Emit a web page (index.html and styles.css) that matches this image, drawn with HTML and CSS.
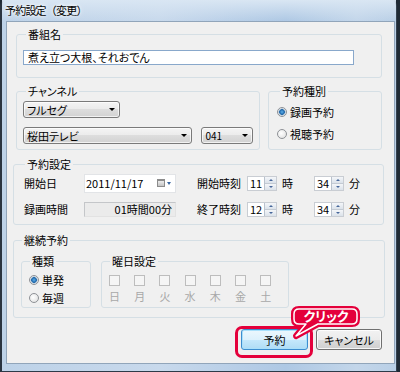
FILE: index.html
```html
<!DOCTYPE html>
<html lang="ja">
<head>
  <meta charset="UTF-8" />
  <title>予約設定（変更）</title>
  <link rel="stylesheet" href="styles.css">
</head>
<body>

<div class="window">
  <div class="titlebar">予約設定（変更）</div>

  <div class="client">
    <fieldset class="group g-title">
      <legend>番組名</legend>
      <div class="textbox">煮え立つ大根、それおでん</div>
    </fieldset>

    <div class="channel-row">
      <fieldset class="group g-channel">
        <legend>チャンネル</legend>
        <div class="combo c-kind">フルセグ<i class="arrow"></i></div>
        <div class="combo-line">
          <div class="combo c-station">桜田テレビ<i class="arrow"></i></div>
          <div class="combo c-num">041<i class="arrow"></i></div>
        </div>
      </fieldset>

      <fieldset class="group g-kind">
        <legend>予約種別</legend>
        <div class="radios">
          <div class="radio on"><i></i>録画予約</div>
          <div class="radio"><i></i>視聴予約</div>
        </div>
      </fieldset>
    </div>

    <fieldset class="group outer g-sched">
      <legend>予約設定</legend>
      <div class="sched-row">
        <span class="lbl">開始日</span>
        <div class="date">2011/11/17<i class="cal"></i><i class="drop"></i></div>
        <span class="lbl2">開始時刻</span>
        <div class="spin"><span>11</span><div class="spin-btns"><b class="up"></b><b class="down"></b></div></div>
        <span class="unit">時</span>
        <div class="spin"><span>34</span><div class="spin-btns"><b class="up"></b><b class="down"></b></div></div>
        <span class="unit last">分</span>
      </div>
      <div class="sched-row">
        <span class="lbl">録画時間</span>
        <div class="readonly">01時間00分</div>
        <span class="lbl2">終了時刻</span>
        <div class="spin"><span>12</span><div class="spin-btns"><b class="up"></b><b class="down"></b></div></div>
        <span class="unit">時</span>
        <div class="spin"><span>34</span><div class="spin-btns"><b class="up"></b><b class="down"></b></div></div>
        <span class="unit last">分</span>
      </div>
    </fieldset>

    <fieldset class="group outer g-repeat">
      <legend>継続予約</legend>
      <div class="repeat-inner">
        <fieldset class="group g-type">
          <legend>種類</legend>
          <div class="radios tight">
            <div class="radio on"><i></i>単発</div>
            <div class="radio"><i></i>毎週</div>
          </div>
        </fieldset>
        <fieldset class="group g-days">
          <legend>曜日設定</legend>
          <div class="days">
            <div class="day"><i></i>日</div>
            <div class="day"><i></i>月</div>
            <div class="day"><i></i>火</div>
            <div class="day"><i></i>水</div>
            <div class="day"><i></i>木</div>
            <div class="day"><i></i>金</div>
            <div class="day"><i></i>土</div>
          </div>
        </fieldset>
      </div>
    </fieldset>

    <div class="buttons">
      <button class="btn default">予約</button>
      <button class="btn">キャンセル</button>
    </div>

    <!-- annotation -->
    <div class="mark"></div>
    <div class="bubble">
      <svg width="80" height="40" viewBox="0 0 80 40">
        <path d="M15 6 H68 Q73 6 73 11 V16 Q73 21 68 21 H34 L12 33 L22 21 H15 Q10 21 10 16 V11 Q10 6 15 6 Z" fill="#e4003b" stroke="#e4003b" stroke-width="6" stroke-linejoin="round"/>
        <path d="M15 6 H68 Q73 6 73 11 V16 Q73 21 68 21 H34 L12 33 L22 21 H15 Q10 21 10 16 V11 Q10 6 15 6 Z" fill="#e4003b" stroke="#ffffff" stroke-width="1.5" stroke-linejoin="round"/>
      </svg>
      <span>クリック</span>
    </div>
  </div>
</div>

</body>
</html>
```

FILE: styles.css
```css
* {
  box-sizing: border-box;
}
body {
  margin: 0;
  width: 400px;
  height: 372px;
  overflow: hidden;
  background: #1f2a35;
  font-family: "Noto Sans CJK JP", "Noto Sans", sans-serif;
  font-size: 11px;
  font-feature-settings: "palt";
  color: #000;
}
.window {
  width: 397px;
  height: 372px;
  border-left: 2px solid #2a3440;
  border-right: 1px solid #34414f;
  border-bottom: 1px solid #2d3a48;
  border-radius: 6px 6px 0 0;
  background: linear-gradient(to right, #bdd2e8, #c8d9ec 40%, #aec8e4 72%, #c3d6ea 90%, #b9cfe6);
}
.titlebar {
  height: 21px;
  line-height: 20px;
  padding-left: 3px;
  font-feature-settings: normal;
  letter-spacing: -0.8px;
  text-shadow: 0 0 5px #fff, 0 0 3px #fff;
  background: linear-gradient(#d9e6f3, rgba(200, 217, 236, 0));
}
.client {
  position: relative;
  margin-left: 4px;
  width: 389px;
  height: 343px;
  border: 1px solid #91a5ba;
  background: #f0f0f0;
}

/* group boxes */
.group {
  margin: 0;
  padding: 0;
  min-width: 0;
  border: 1px solid #d5dfe5;
  border-radius: 3px;
}
.group legend {
  padding: 0 2px;
  margin-left: 3px;
  line-height: 12px;
}
.group.outer legend {
  margin-left: 1px;
}
.g-title {
  margin: 6px 0 0 9px;
  width: 366px;
  padding: 10px 6px 12px;
}
.textbox {
  width: 331px;
  height: 15px;
  line-height: 13px;
  padding-left: 4px;
  background: #fff;
  border: 1px solid #89a8cb;
}

.channel-row {
  display: flex;
  gap: 8px;
  margin: 7px 0 0 9px;
}
.g-channel {
  width: 244px;
  padding: 4px 6px 5px;
}
.g-kind {
  width: 114px;
  padding: 8px 8px 0;
}
.combo {
  display: flex;
  align-items: center;
  justify-content: space-between;
  height: 17px;
  padding: 0 4px 0 3px;
  border: 1px solid #7a7a7a;
  border-radius: 3px;
  background: linear-gradient(#f4f4f4, #ebebeb 50%, #dddddd 50%, #d2d2d2);
  box-shadow: inset 0 0 0 1px rgba(255, 255, 255, 0.7);
  line-height: 14px;
}
.combo .arrow {
  border-top: 3px solid #000;
  border-left: 3px solid transparent;
  border-right: 3px solid transparent;
}
.c-kind {
  width: 97px;
}
.combo-line {
  display: flex;
  gap: 9px;
  margin-top: 9px;
}
.c-station {
  width: 171px;
}
.c-num {
  width: 52px;
  font-size: 10px;
}

.radios {
  display: flex;
  flex-direction: column;
  gap: 8px;
}
.radios.tight {
  gap: 4px;
}
.radio {
  display: flex;
  align-items: center;
  gap: 3px;
  height: 14px;
}
.radio i {
  width: 10px;
  height: 10px;
  border-radius: 50%;
  border: 1px solid #8e9196;
  background: radial-gradient(circle at 40% 40%, #ffffff, #dcdcdc);
}
.radio.on i {
  background: radial-gradient(circle, #5db0ea 0, #1d64a8 2.5px, #9fb9cf 3px, #f2f4f6 4px);
}

/* reservation settings */
.g-sched {
  margin: 8px 0 0 6px;
  width: 371px;
  padding: 3px 0 5px 10px;
}
.sched-row {
  display: flex;
  align-items: center;
  height: 20px;
}
.sched-row + .sched-row {
  margin-top: 6px;
}
.lbl {
  width: 60px;
}
.lbl2 {
  width: 50px;
  margin-left: 21px;
}
.date {
  display: flex;
  align-items: center;
  width: 92px;
  height: 19px;
  padding-left: 1px;
  background: #fff;
  border: 1px solid #e2e4e7;
}
.date .cal {
  margin-left: auto;
  width: 8px;
  height: 8px;
  border: 1px solid #8c8c8c;
  border-top-width: 2px;
  background: linear-gradient(#ececec, #c4c4c4);
}
.date .drop {
  margin: 0 4px 0 2px;
  border-top: 3px solid #3a66a0;
  border-left: 2.5px solid transparent;
  border-right: 2.5px solid transparent;
}
.readonly {
  width: 92px;
  height: 15px;
  line-height: 13px;
  text-align: right;
  padding-right: 3px;
  background: #ebebeb;
  border: 1px solid #c4c6c9;
  border-bottom-color: #e2e2e2;
  border-right-color: #e2e2e2;
}
.spin {
  display: flex;
  width: 30px;
  height: 15px;
  line-height: 13px;
  background: #fff;
  border: 1px solid #c9cdd3;
}
.spin span {
  padding-left: 2px;
}
.spin-btns {
  margin-left: auto;
  width: 12px;
  display: flex;
  flex-direction: column;
  border-left: 1px solid #b9c2cd;
}
.spin-btns b {
  flex: 1;
  display: flex;
  align-items: center;
  justify-content: center;
  background: linear-gradient(#f4f6f9, #dbe2ea);
}
.spin-btns b + b {
  border-top: 1px solid #c3cad3;
}
.spin-btns .up::before {
  content: "";
  border-bottom: 2px solid #47679a;
  border-left: 2px solid transparent;
  border-right: 2px solid transparent;
}
.spin-btns .down::before {
  content: "";
  border-top: 2px solid #47679a;
  border-left: 2px solid transparent;
  border-right: 2px solid transparent;
}
.unit {
  width: 37px;
  padding-left: 5px;
}
.unit.last {
  width: auto;
}

/* repeat */
.g-repeat {
  margin: 9px 0 0 6px;
  width: 372px;
  padding: 9px 7px 9px;
}
.repeat-inner {
  display: flex;
  gap: 10px;
}
.g-type {
  width: 70px;
  padding: 6px 0 2px 7px;
}
.g-days {
  width: 188px;
  padding: 8px 0 4px 7px;
}
.days {
  display: grid;
  grid-template-columns: repeat(7, 11px);
  column-gap: 14.2px;
}
.day {
  display: flex;
  flex-direction: column;
  align-items: center;
  color: #a8a8a8;
  line-height: 12px;
}
.day i {
  width: 11px;
  height: 11px;
  margin-bottom: 4px;
  border: 1px solid #bdbdbd;
  background: #f5f5f5;
}

/* buttons */
.buttons {
  display: flex;
  justify-content: flex-end;
  gap: 8px;
  margin-top: 11px;
  padding-right: 12px;
}
.btn {
  height: 21px;
  width: 66px;
  padding: 0;
  font-family: inherit;
  font-size: 11px;
  font-feature-settings: "palt";
  color: #000;
  border: 1px solid #707070;
  border-radius: 3px;
  background: linear-gradient(#f2f2f2, #ebebeb 50%, #dddddd 50%, #cfcfcf);
  box-shadow: inset 0 0 0 1px rgba(255, 255, 255, 0.8);
}
.btn.default {
  width: 67px;
  border-color: #3c8dcf;
  background: linear-gradient(#ecf7fd, #ddf1fc 50%, #c6e9fc 50%, #afdcf5);
  box-shadow: inset 0 0 0 1px #a9e0fb;
}

/* annotation */
.mark {
  position: absolute;
  left: 228px;
  top: 304px;
  width: 78px;
  height: 32px;
  border: 3px solid #e4003b;
  border-radius: 7px;
}
.bubble {
  position: absolute;
  left: 277px;
  top: 281px;
  width: 80px;
  height: 40px;
}
.bubble svg {
  display: block;
}
.bubble span {
  position: absolute;
  left: 7px;
  top: 3px;
  width: 70px;
  height: 21px;
  line-height: 20px;
  text-align: center;
  color: #fff;
  font-weight: bold;
  font-size: 13px;
  letter-spacing: -0.2px;
}
```
